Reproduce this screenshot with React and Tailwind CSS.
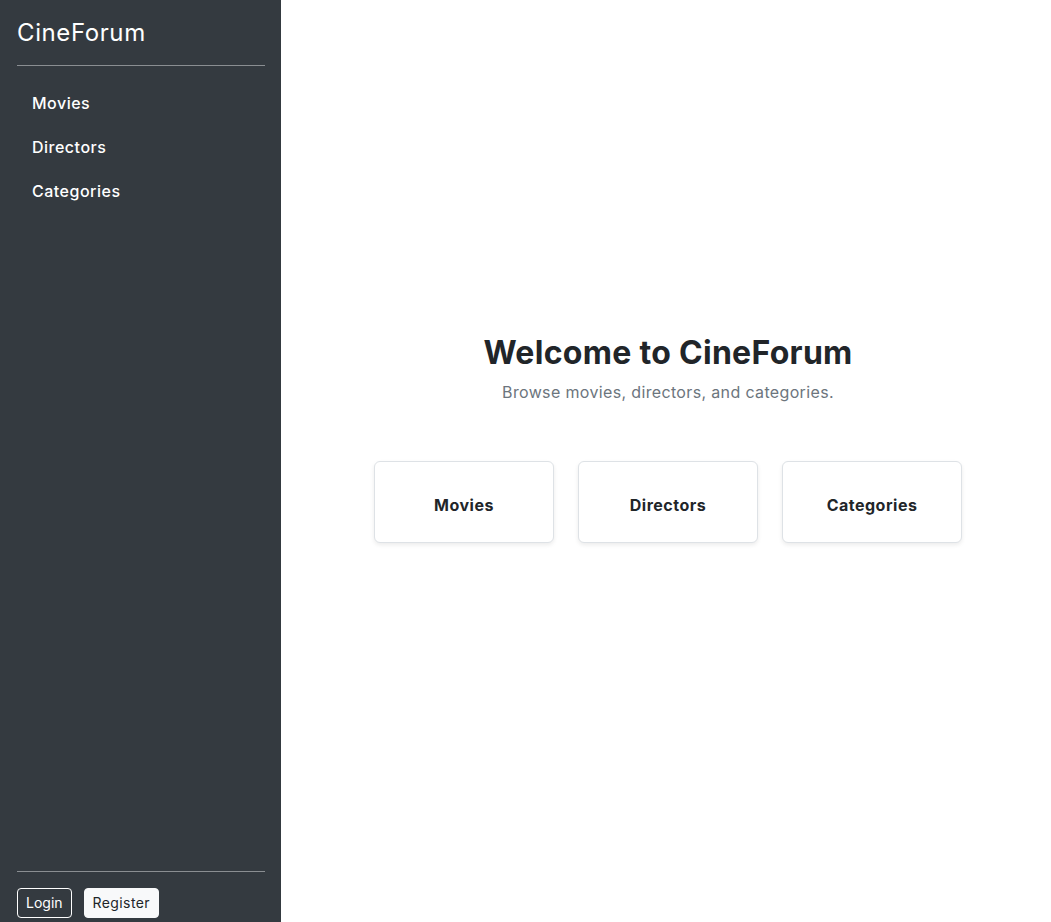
import React from 'react';

export default function App() {
  const links = ['Movies', 'Directors', 'Categories'];

  return (
    <div className="flex h-screen w-full bg-white font-['Inter',sans-serif]">
      {/* sidebar */}
      <aside className="flex w-[281px] shrink-0 flex-col bg-[#343a40] px-4 pt-[16px] pb-1 text-white">
        <div className="pl-[1px] text-[24px] leading-[33px] tracking-[0.6px]">CineForum</div>
        <hr className="mt-4 mb-[15px] ml-[1px] border-t border-[#8a8e92]" />
        <nav className="flex flex-col">
          {links.map((l) => (
            <a key={l} href="#" className="px-4 py-[10px] text-[16px] leading-[24px] font-medium tracking-[0.5px]">
              {l}
            </a>
          ))}
        </nav>
        <div className="mt-auto">
          <hr className="mb-4 ml-[1px] border-t border-[#8a8e92]" />
          <div className="flex gap-3 pl-[1px]">
            <button className="rounded border border-white px-2 py-1 text-[14px] leading-[20px] text-white">Login</button>
            <button className="rounded border border-[#f8f9fa] bg-[#f8f9fa] px-2 py-1 text-[14px] leading-[20px] tracking-[0.4px] text-[#212529]">Register</button>
          </div>
        </div>
      </aside>

      {/* main */}
      <main className="flex flex-1 flex-col items-center justify-center pt-[3px] pl-1">
        <h1 className="text-[32px] leading-[38px] font-bold text-[#212529] tracking-[0.3px]">Welcome to CineForum</h1>
        <p className="mt-[8px] text-[16px] leading-[24px] text-[#6c757d] tracking-[0.35px]">Browse movies, directors, and categories.</p>
        <div className="mt-[57px] mb-12 flex gap-6">
          {links.map((l) => (
            <a
              key={l}
              href="#"
              className="flex h-[82px] w-[180px] items-center justify-center rounded-md border border-[#dee2e6] bg-white pt-[5px] text-[16px] font-bold tracking-[0.5px] text-[#212529] shadow-[0_2px_4px_rgba(0,0,0,0.08)]"
            >
              {l}
            </a>
          ))}
        </div>
      </main>
    </div>
  );
}
